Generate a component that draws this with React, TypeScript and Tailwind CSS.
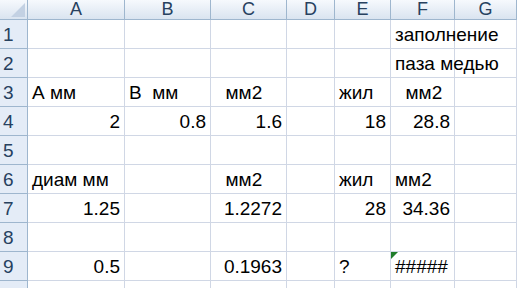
import React from "react";

type Cell = { t: string; a?: "l" | "r" };

const cols = ["A", "B", "C", "D", "E", "F", "G"];
const colW = ["w-[97px]", "w-[86px]", "w-[76px]", "w-[48px]", "w-[56px]", "w-[64px]", "flex-1"];

const rows: Record<number, Record<number, Cell>> = {
  1: { 5: { t: "заполнение" } },
  2: { 5: { t: "паза медью" } },
  3: { 0: { t: "А мм" }, 1: { t: "В  мм" }, 2: { t: "  мм2" }, 4: { t: "жил" }, 5: { t: "  мм2" } },
  4: { 0: { t: "2", a: "r" }, 1: { t: "0.8", a: "r" }, 2: { t: "1.6", a: "r" }, 4: { t: "18", a: "r" }, 5: { t: "28.8", a: "r" } },
  5: {},
  6: { 0: { t: "диам мм" }, 2: { t: "  мм2" }, 4: { t: "жил" }, 5: { t: "мм2" } },
  7: { 0: { t: "1.25", a: "r" }, 2: { t: "1.2272", a: "r" }, 4: { t: "28", a: "r" }, 5: { t: "34.36", a: "r" } },
  8: {},
  9: { 0: { t: "0.5", a: "r" }, 2: { t: "0.1963", a: "r" }, 4: { t: "?" }, 5: { t: "#####" } },
};

const font = { fontFamily: '"Liberation Sans", Arial, sans-serif' };

export default function App() {
  return (
    <div className="w-[517px] h-[288px] overflow-hidden bg-white text-[19px] text-black" style={font}>
      {/* column headers */}
      <div className="flex h-[20px]">
        <div className="relative w-[28px] shrink-0 border-r border-b border-[#9eb6ce] bg-gradient-to-b from-[#f6f9fd] to-[#dae4f0]">
          <svg className="absolute right-[2px] bottom-[2px]" width="14" height="14" viewBox="0 0 14 14">
            <polygon points="14,0 14,14 0,14" fill="#c3d1e3" />
          </svg>
        </div>
        {cols.map((c, i) => (
          <div
            key={c}
            className={`${colW[i]} ${i === 6 ? "" : "shrink-0"} flex items-center justify-center border-r border-b border-[#9eb6ce] bg-gradient-to-b from-[#f6f9fd] to-[#dae4f0] text-[#27415f] text-[18px] leading-[19px]`}
          >
            {c}
          </div>
        ))}
      </div>
      {[1, 2, 3, 4, 5, 6, 7, 8, 9, 10].map((r) => {
        const row = rows[r] ?? {};
        return (
          <div key={r} className="flex h-[29px]">
            <div className="w-[28px] shrink-0 flex items-end pl-[3px] pb-[3px] border-r border-b border-[#9eb6ce] bg-[#e4ecf7] text-[#27415f] leading-[20px]">
              {r < 10 ? r : null}
            </div>
            {cols.map((c, i) => {
              const cell = row[i];
              const isErr = r === 9 && i === 5;
              return (
                <div
                  key={c}
                  className={`${colW[i]} ${i === 6 ? "" : "shrink-0"} relative flex items-end border-r border-b border-[#d0d7e5] px-[4px] pb-[3px] leading-[20px] whitespace-pre overflow-visible ${
                    cell?.a === "r" ? "justify-end" : "justify-start"
                  }`}
                >
                  {isErr && (
                    <svg className="absolute left-0 top-0" width="7" height="7" viewBox="0 0 7 7">
                      <polygon points="0,0 7,0 0,7" fill="#1f7d2a" />
                    </svg>
                  )}
                  {cell ? <span>{cell.t}</span> : null}
                </div>
              );
            })}
          </div>
        );
      })}
    </div>
  );
}
